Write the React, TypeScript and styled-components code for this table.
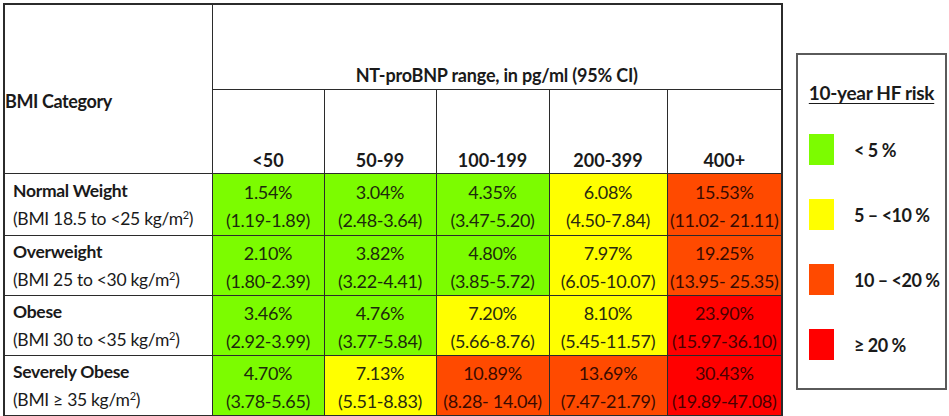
import React from "react";
import styled, { createGlobalStyle } from "styled-components";

const GlobalStyle = createGlobalStyle`
	html, body {
		margin: 0;
		padding: 0;
		background: #ffffff;
	}
	body {
		font-family: Lato, "Open Sans", sans-serif;
		color: #1a1a1a;
	}
`;

type Risk = "low" | "mid" | "high" | "severe";

const riskColors: Record<Risk, string> = {
	low: "#7cfc00",
	mid: "#ffff00",
	high: "#ff4a00",
	severe: "#ff0000",
};

const riskText: Record<Risk, string> = {
	low: "#1c2a0c",
	mid: "#2a2a10",
	high: "#3a0a00",
	severe: "#4a0000",
};

const ranges = ["<50", "50-99", "100-199", "200-399", "400+"];
const colWidths = [208, 112, 112, 113, 118, 115];

const rows: {
	name: string;
	bmi: React.ReactNode;
	height: number;
	cells: { pct: string; ci: string; risk: Risk }[];
}[] = [
	{
		name: "Normal Weight",
		bmi: (
			<>
				(BMI 18.5 to &lt;25 kg/m<sup>2</sup>)
			</>
		),
		height: 62,
		cells: [
			{ pct: "1.54%", ci: "(1.19-1.89)", risk: "low" },
			{ pct: "3.04%", ci: "(2.48-3.64)", risk: "low" },
			{ pct: "4.35%", ci: "(3.47-5.20)", risk: "low" },
			{ pct: "6.08%", ci: "(4.50-7.84)", risk: "mid" },
			{ pct: "15.53%", ci: "(11.02- 21.11)", risk: "high" },
		],
	},
	{
		name: "Overweight",
		bmi: (
			<>
				(BMI 25 to &lt;30 kg/m<sup>2</sup>)
			</>
		),
		height: 59,
		cells: [
			{ pct: "2.10%", ci: "(1.80-2.39)", risk: "low" },
			{ pct: "3.82%", ci: "(3.22-4.41)", risk: "low" },
			{ pct: "4.80%", ci: "(3.85-5.72)", risk: "low" },
			{ pct: "7.97%", ci: "(6.05-10.07)", risk: "mid" },
			{ pct: "19.25%", ci: "(13.95- 25.35)", risk: "high" },
		],
	},
	{
		name: "Obese",
		bmi: (
			<>
				(BMI 30 to &lt;35 kg/m<sup>2</sup>)
			</>
		),
		height: 60,
		cells: [
			{ pct: "3.46%", ci: "(2.92-3.99)", risk: "low" },
			{ pct: "4.76%", ci: "(3.77-5.84)", risk: "low" },
			{ pct: "7.20%", ci: "(5.66-8.76)", risk: "mid" },
			{ pct: "8.10%", ci: "(5.45-11.57)", risk: "mid" },
			{ pct: "23.90%", ci: "(15.97-36.10)", risk: "severe" },
		],
	},
	{
		name: "Severely Obese",
		bmi: (
			<>
				(BMI ≥ 35 kg/m<sup>2</sup>)
			</>
		),
		height: 59,
		cells: [
			{ pct: "4.70%", ci: "(3.78-5.65)", risk: "low" },
			{ pct: "7.13%", ci: "(5.51-8.83)", risk: "mid" },
			{ pct: "10.89%", ci: "(8.28- 14.04)", risk: "high" },
			{ pct: "13.69%", ci: "(7.47-21.79)", risk: "high" },
			{ pct: "30.43%", ci: "(19.89-47.08)", risk: "severe" },
		],
	},
];

const legend: { label: string; risk: Risk }[] = [
	{ label: "< 5 %", risk: "low" },
	{ label: "5 – <10 %", risk: "mid" },
	{ label: "10 – <20 %", risk: "high" },
	{ label: "≥ 20 %", risk: "severe" },
];

function App() {
	return (
		<>
			<GlobalStyle />
			<Page>
				<Table>
					<colgroup>
						{colWidths.map((w, i) => (
							<col key={i} style={{ width: w }} />
						))}
					</colgroup>
					<thead>
						<Row $h={85}>
							<CategoryHead rowSpan={2}>BMI Category</CategoryHead>
							<RangeTitle colSpan={5}>NT-proBNP range, in pg/ml (95% CI)</RangeTitle>
						</Row>
						<Row $h={84}>
							{ranges.map((r) => (
								<RangeHead key={r}>{r}</RangeHead>
							))}
						</Row>
					</thead>
					<tbody>
						{rows.map((row) => (
							<Row key={row.name} $h={row.height}>
								<LabelCell>
									<LabelName>{row.name}</LabelName>
									<LabelSub>{row.bmi}</LabelSub>
								</LabelCell>
								{row.cells.map((c, i) => (
									<RiskCell key={i} $risk={c.risk}>
										<div>{c.pct}</div>
										<div>{c.ci}</div>
									</RiskCell>
								))}
							</Row>
						))}
					</tbody>
				</Table>
				<Legend>
					<LegendTitle>10-year HF risk</LegendTitle>
					<LegendList>
						{legend.map((l) => (
							<LegendItem key={l.label}>
								<Swatch $risk={l.risk} />
								<LegendLabel>{l.label}</LegendLabel>
							</LegendItem>
						))}
					</LegendList>
				</Legend>
			</Page>
		</>
	);
}

const Page = styled.div`
	display: flex;
	align-items: flex-start;
	padding: 3px 2px 0 3px;
	gap: 13px;
`;

const Table = styled.table`
	border-collapse: collapse;
	table-layout: fixed;
	width: 778px;
	border: 2px solid #2b2b2b;

	td,
	th {
		border: 1.5px solid #2b2b2b;
		padding: 0;
	}
`;

const Row = styled.tr<{ $h: number }>`
	height: ${(p) => p.$h}px;
`;

const CategoryHead = styled.th`
	text-align: left;
	vertical-align: middle;
	padding: 24px 0 0 0 !important;
	font-size: 18px;
	font-weight: 700;
	letter-spacing: -0.4px;
`;

const RangeTitle = styled.th`
	vertical-align: bottom;
	padding-bottom: 3px !important;
	font-size: 18px;
	font-weight: 700;
	letter-spacing: -0.2px;
`;

const RangeHead = styled.th`
	vertical-align: bottom;
	padding-bottom: 2px !important;
	font-size: 18px;
	font-weight: 700;
`;

const LabelCell = styled.td`
	vertical-align: middle;
	padding: 0 0 0 8px !important;
	background: #ffffff;
`;

const LabelName = styled.div`
	font-size: 17.5px;
	font-weight: 700;
	line-height: 28px;
	letter-spacing: -0.3px;
`;

const LabelSub = styled.div`
	font-size: 17.5px;
	line-height: 27px;
	letter-spacing: -0.3px;

	sup {
		font-size: 11px;
		line-height: 0;
		vertical-align: 6px;
	}
`;

const RiskCell = styled.td<{ $risk: Risk }>`
	background: ${(p) => riskColors[p.$risk]};
	color: ${(p) => riskText[p.$risk]};
	text-align: center;
	vertical-align: middle;
	padding-top: 3px !important;
	font-size: 18px;
	line-height: 28px;
	letter-spacing: -0.3px;
`;

const Legend = styled.div`
	margin-top: 50px;
	width: 148px;
	height: 307px;
	border: 2px solid #5a5a5a;
	display: flex;
	flex-direction: column;
	align-items: center;
	padding-top: 26px;
	box-sizing: content-box;
`;

const LegendTitle = styled.div`
	font-size: 19px;
	font-weight: 700;
	text-decoration: underline;
	text-underline-offset: 3px;
	letter-spacing: -0.3px;
`;

const LegendList = styled.div`
	align-self: stretch;
	display: flex;
	flex-direction: column;
	gap: 34px;
	margin-top: 30px;
	padding-left: 11px;
`;

const LegendItem = styled.div`
	display: flex;
	align-items: center;
	gap: 20px;
`;

const Swatch = styled.div<{ $risk: Risk }>`
	width: 25px;
	height: 31px;
	background: ${(p) => riskColors[p.$risk]};
`;

const LegendLabel = styled.div`
	font-size: 18px;
	font-weight: 700;
	letter-spacing: -0.5px;
`;

export default App;
